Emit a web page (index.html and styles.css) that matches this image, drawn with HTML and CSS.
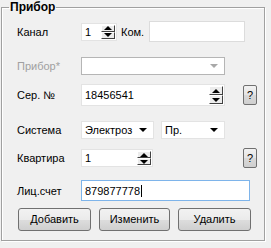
FILE: index.html
```html
<!DOCTYPE html>
<html lang="ru">

<head>
    <meta charset="UTF-8">
    <title>Прибор</title>
    <link rel="stylesheet" href="styles.css">
</head>

<body>
    <fieldset class="group">
        <legend>Прибор</legend>

        <div class="row row-kanal">
            <span class="lbl">Канал</span>
            <div class="box spin w-small">
                <span class="val">1</span>
                <span class="spin-btns"><i class="up"></i><i class="down"></i></span>
            </div>
            <span class="lbl-kom">Ком.</span>
            <div class="box w-kom"></div>
        </div>

        <div class="row row-pribor">
            <span class="lbl disabled">Прибор*</span>
            <div class="box combo disabled-box w-wide">
                <span class="val"></span>
                <span class="arrow"></span>
            </div>
        </div>

        <div class="row row-ser">
            <span class="lbl">Сер. №</span>
            <div class="box spin w-wide">
                <span class="val">18456541</span>
                <span class="spin-btns"><i class="up"></i><i class="down"></i></span>
            </div>
            <div class="help">?</div>
        </div>

        <div class="row row-sys">
            <span class="lbl">Система</span>
            <div class="box combo w-sys1">
                <span class="val">Электроз</span>
                <span class="arrow"></span>
            </div>
            <div class="box combo w-sys2">
                <span class="val">Пр.</span>
                <span class="arrow"></span>
            </div>
        </div>

        <div class="row row-kv">
            <span class="lbl">Квартира</span>
            <div class="box spin w-kv">
                <span class="val">1</span>
                <span class="spin-btns"><i class="up"></i><i class="down"></i></span>
            </div>
            <div class="help">?</div>
        </div>

        <div class="row row-lic">
            <span class="lbl">Лиц.счет</span>
            <div class="box focus w-lic">
                <span class="val">879877778<span class="caret"></span></span>
            </div>
        </div>

        <div class="btns">
            <div class="btn">Добавить</div>
            <div class="btn btn-mid">Изменить</div>
            <div class="btn">Удалить</div>
        </div>
    </fieldset>
</body>

</html>
```

FILE: styles.css
```css
* {
    box-sizing: border-box;
}

body {
    margin: 0;
    width: 271px;
    height: 248px;
    background-color: #f0f0f0;
    font-family: "Liberation Sans", Arial, sans-serif;
    font-size: 11px;
    color: #000;
}

.group {
    margin: 0 0 0 1px;
    padding: 0 0 0 15px;
    width: 264px;
    height: 241px;
    border: 1px solid #a0a0a0;
    box-shadow: inset 1px 1px 0 #fff, 1px 1px 0 #fff;
}

.group legend {
    margin-left: -8px;
    padding: 0 1px;
    font-size: 12px;
    font-weight: bold;
    line-height: 14px;
}

.row {
    display: flex;
    align-items: center;
}

.lbl {
    width: 64px;
}

.lbl.disabled {
    color: #a0a0a0;
}

.row-kanal {
    margin-top: 7px;
    height: 21px;
}

.row-pribor {
    margin-top: 15px;
    height: 18px;
}

.row-ser {
    margin-top: 9px;
    height: 22px;
}

.row-sys {
    margin-top: 15px;
    height: 18px;
}

.row-kv {
    margin-top: 9px;
    height: 20px;
}

.row-lic {
    margin-top: 12px;
    height: 21px;
}

.box {
    height: 100%;
    display: flex;
    align-items: center;
    background-color: #fff;
    border: 1px solid #e3e3e3;
    position: relative;
}

.box .val {
    flex: 1;
    padding-left: 3px;
    white-space: nowrap;
}

.row-kanal .spin,
.row-kv .spin {
    height: 18px;
}

.w-small {
    width: 36px;
}

.w-kom {
    flex: none;
    width: 96px;
    border-color: #dcdcdc;
}

.lbl-kom {
    margin: 0 5px 0 4px;
}

.w-wide {
    width: 144px;
}

.w-sys1 {
    width: 73px;
    margin-right: 7px;
}

.w-sys2 {
    width: 64px;
}

.w-kv {
    width: 72px;
}

.w-lic {
    width: 169px;
}

.focus {
    border-color: #7eb4ea;
}

.caret {
    display: inline-block;
    width: 1px;
    height: 12px;
    margin-left: 1px;
    background-color: #000;
    vertical-align: -2px;
}

.disabled-box {
    border-color: #b5b5b5;
}

.spin-btns {
    width: 15px;
    height: 100%;
    display: flex;
    flex-direction: column;
    padding: 1px 1px 1px 0;
}

.spin-btns i {
    flex: 1;
    position: relative;
    background-color: #ececec;
    border: 1px solid;
    border-color: #fff #404040 #404040 #fff;
}

.spin-btns i::after {
    content: "";
    position: absolute;
    left: 50%;
    top: 50%;
    margin-left: -4px;
    border-left: 4px solid transparent;
    border-right: 4px solid transparent;
}

.spin-btns .up::after {
    margin-top: -2px;
    border-bottom: 4px solid #000;
}

.spin-btns .down::after {
    margin-top: -2px;
    border-top: 4px solid #000;
}

.arrow {
    width: 7px;
    height: 4px;
    margin-right: 6px;
    border-left: 4px solid transparent;
    border-right: 4px solid transparent;
    border-top: 4px solid #000;
}

.disabled-box .arrow {
    border-top-color: #a8a8a8;
}

.help {
    width: 14px;
    height: 20px;
    margin-left: auto;
    margin-right: 7px;
    border: 1px solid #707070;
    border-radius: 2px;
    background: linear-gradient(#f2f2f2, #e4e4e4 50%, #d9d9d9 51%, #cfcfcf);
    text-align: center;
    line-height: 18px;
}

.btns {
    display: flex;
    gap: 8px;
    margin-top: 7px;
    margin-left: 1px;
}

.btn {
    width: 73px;
    height: 23px;
    border: 1px solid #707070;
    border-radius: 3px;
    background: linear-gradient(#f2f2f2, #ebebeb 50%, #dddddd 51%, #cfcfcf);
    text-align: center;
    line-height: 21px;
    font-size: 11px;
}

.btn-mid {
    width: 71px;
}
```
